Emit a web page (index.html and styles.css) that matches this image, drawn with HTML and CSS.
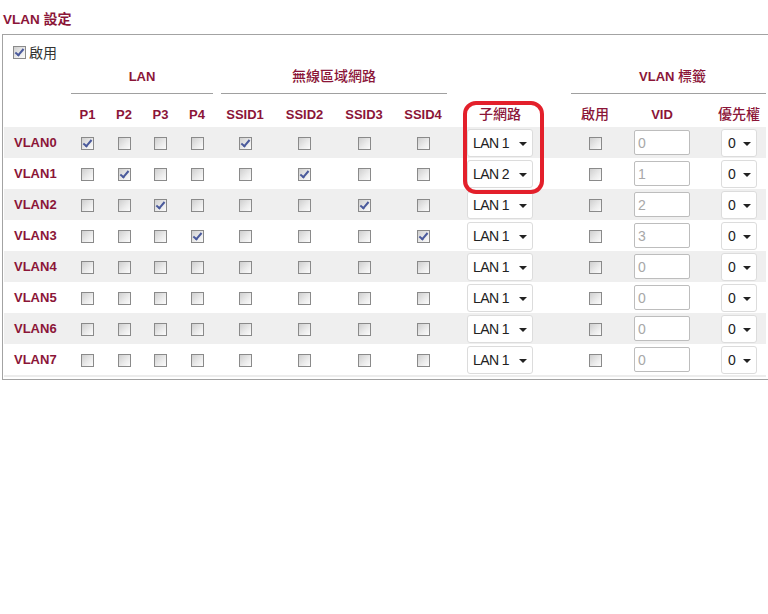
FILE: index.html
```html
<!DOCTYPE html>
<html>
<head lang="zh-Hant">
    <meta charset="UTF-8">
    <title>VLAN 設定</title>
    <link rel="stylesheet" href="styles.css">
</head>
<body>
<div class="page-title">VLAN <span class="zh">設定</span></div>
<div class="vlan-box">
    <div class="vlan-enable">
        <label><input type="checkbox" class="cb" checked> 啟用</label>
    </div>
    <table class="vlan-table">
        <colgroup>
            <col class="c-name">
            <col class="c-p1"><col class="c-p2"><col class="c-p3"><col class="c-p4">
            <col class="c-s1"><col class="c-s2"><col class="c-s3"><col class="c-s4">
            <col class="c-sub">
            <col class="c-tag"><col class="c-vid"><col class="c-pri">
        </colgroup>
        <tr class="group-row">
            <th></th>
            <th colspan="4"><div class="group group-lan">LAN</div></th>
            <th colspan="4"><div class="group group-wlan"><span class="zh">無線區域網路</span></div></th>
            <th></th>
            <th colspan="3"><div class="group group-tag">VLAN <span class="zh">標籤</span></div></th>
        </tr>
        <tr class="head-row">
            <th></th>
            <th>P1</th><th>P2</th><th>P3</th><th>P4</th>
            <th>SSID1</th><th>SSID2</th><th>SSID3</th><th>SSID4</th>
            <th class="th-sub"><span class="zh">子網路</span></th>
            <th><span class="zh">啟用</span></th>
            <th>VID</th>
            <th class="th-pri"><span class="zh">優先權</span></th>
        </tr>
        <tr class="odd">
            <td class="name">VLAN0</td>
            <td><input type="checkbox" class="cb" checked></td><td><input type="checkbox" class="cb"></td><td><input type="checkbox" class="cb"></td><td><input type="checkbox" class="cb"></td>
            <td><input type="checkbox" class="cb" checked></td><td><input type="checkbox" class="cb"></td><td><input type="checkbox" class="cb"></td><td><input type="checkbox" class="cb"></td>
            <td class="sub"><span class="sel"><select class="sel-lan"><option selected>LAN 1</option><option>LAN 2</option><option>LAN 3</option><option>LAN 4</option></select></span></td>
            <td><input type="checkbox" class="cb"></td>
            <td class="vid"><input type="text" class="vid-input" value="0" disabled></td>
            <td class="pri"><span class="sel"><select class="sel-pri"><option>0</option><option>1</option><option>2</option><option>3</option></select></span></td>
        </tr>
        <tr>
            <td class="name">VLAN1</td>
            <td><input type="checkbox" class="cb"></td><td><input type="checkbox" class="cb" checked></td><td><input type="checkbox" class="cb"></td><td><input type="checkbox" class="cb"></td>
            <td><input type="checkbox" class="cb"></td><td><input type="checkbox" class="cb" checked></td><td><input type="checkbox" class="cb"></td><td><input type="checkbox" class="cb"></td>
            <td class="sub"><span class="sel"><select class="sel-lan"><option>LAN 1</option><option selected>LAN 2</option><option>LAN 3</option><option>LAN 4</option></select></span></td>
            <td><input type="checkbox" class="cb"></td>
            <td class="vid"><input type="text" class="vid-input" value="1" disabled></td>
            <td class="pri"><span class="sel"><select class="sel-pri"><option>0</option><option>1</option><option>2</option><option>3</option></select></span></td>
        </tr>
        <tr class="odd">
            <td class="name">VLAN2</td>
            <td><input type="checkbox" class="cb"></td><td><input type="checkbox" class="cb"></td><td><input type="checkbox" class="cb" checked></td><td><input type="checkbox" class="cb"></td>
            <td><input type="checkbox" class="cb"></td><td><input type="checkbox" class="cb"></td><td><input type="checkbox" class="cb" checked></td><td><input type="checkbox" class="cb"></td>
            <td class="sub"><span class="sel"><select class="sel-lan"><option selected>LAN 1</option><option>LAN 2</option><option>LAN 3</option><option>LAN 4</option></select></span></td>
            <td><input type="checkbox" class="cb"></td>
            <td class="vid"><input type="text" class="vid-input" value="2" disabled></td>
            <td class="pri"><span class="sel"><select class="sel-pri"><option>0</option><option>1</option><option>2</option><option>3</option></select></span></td>
        </tr>
        <tr>
            <td class="name">VLAN3</td>
            <td><input type="checkbox" class="cb"></td><td><input type="checkbox" class="cb"></td><td><input type="checkbox" class="cb"></td><td><input type="checkbox" class="cb" checked></td>
            <td><input type="checkbox" class="cb"></td><td><input type="checkbox" class="cb"></td><td><input type="checkbox" class="cb"></td><td><input type="checkbox" class="cb" checked></td>
            <td class="sub"><span class="sel"><select class="sel-lan"><option selected>LAN 1</option><option>LAN 2</option><option>LAN 3</option><option>LAN 4</option></select></span></td>
            <td><input type="checkbox" class="cb"></td>
            <td class="vid"><input type="text" class="vid-input" value="3" disabled></td>
            <td class="pri"><span class="sel"><select class="sel-pri"><option>0</option><option>1</option><option>2</option><option>3</option></select></span></td>
        </tr>
        <tr class="odd">
            <td class="name">VLAN4</td>
            <td><input type="checkbox" class="cb"></td><td><input type="checkbox" class="cb"></td><td><input type="checkbox" class="cb"></td><td><input type="checkbox" class="cb"></td>
            <td><input type="checkbox" class="cb"></td><td><input type="checkbox" class="cb"></td><td><input type="checkbox" class="cb"></td><td><input type="checkbox" class="cb"></td>
            <td class="sub"><span class="sel"><select class="sel-lan"><option selected>LAN 1</option><option>LAN 2</option><option>LAN 3</option><option>LAN 4</option></select></span></td>
            <td><input type="checkbox" class="cb"></td>
            <td class="vid"><input type="text" class="vid-input" value="0" disabled></td>
            <td class="pri"><span class="sel"><select class="sel-pri"><option>0</option><option>1</option><option>2</option><option>3</option></select></span></td>
        </tr>
        <tr>
            <td class="name">VLAN5</td>
            <td><input type="checkbox" class="cb"></td><td><input type="checkbox" class="cb"></td><td><input type="checkbox" class="cb"></td><td><input type="checkbox" class="cb"></td>
            <td><input type="checkbox" class="cb"></td><td><input type="checkbox" class="cb"></td><td><input type="checkbox" class="cb"></td><td><input type="checkbox" class="cb"></td>
            <td class="sub"><span class="sel"><select class="sel-lan"><option selected>LAN 1</option><option>LAN 2</option><option>LAN 3</option><option>LAN 4</option></select></span></td>
            <td><input type="checkbox" class="cb"></td>
            <td class="vid"><input type="text" class="vid-input" value="0" disabled></td>
            <td class="pri"><span class="sel"><select class="sel-pri"><option>0</option><option>1</option><option>2</option><option>3</option></select></span></td>
        </tr>
        <tr class="odd">
            <td class="name">VLAN6</td>
            <td><input type="checkbox" class="cb"></td><td><input type="checkbox" class="cb"></td><td><input type="checkbox" class="cb"></td><td><input type="checkbox" class="cb"></td>
            <td><input type="checkbox" class="cb"></td><td><input type="checkbox" class="cb"></td><td><input type="checkbox" class="cb"></td><td><input type="checkbox" class="cb"></td>
            <td class="sub"><span class="sel"><select class="sel-lan"><option selected>LAN 1</option><option>LAN 2</option><option>LAN 3</option><option>LAN 4</option></select></span></td>
            <td><input type="checkbox" class="cb"></td>
            <td class="vid"><input type="text" class="vid-input" value="0" disabled></td>
            <td class="pri"><span class="sel"><select class="sel-pri"><option>0</option><option>1</option><option>2</option><option>3</option></select></span></td>
        </tr>
        <tr>
            <td class="name">VLAN7</td>
            <td><input type="checkbox" class="cb"></td><td><input type="checkbox" class="cb"></td><td><input type="checkbox" class="cb"></td><td><input type="checkbox" class="cb"></td>
            <td><input type="checkbox" class="cb"></td><td><input type="checkbox" class="cb"></td><td><input type="checkbox" class="cb"></td><td><input type="checkbox" class="cb"></td>
            <td class="sub"><span class="sel"><select class="sel-lan"><option selected>LAN 1</option><option>LAN 2</option><option>LAN 3</option><option>LAN 4</option></select></span></td>
            <td><input type="checkbox" class="cb"></td>
            <td class="vid"><input type="text" class="vid-input" value="0" disabled></td>
            <td class="pri"><span class="sel"><select class="sel-pri"><option>0</option><option>1</option><option>2</option><option>3</option></select></span></td>
        </tr>
    </table>
</div>
<!-- 標示子網路欄位 -->
<div class="mark-sub"></div>
</body>
</html>
```
FILE: styles.css
```css
html, body {
    margin: 0px;
    padding: 0px;
    background: #ffffff;
    overflow: hidden;
}
body {
    font-family: "Liberation Sans", Arial, "Noto Sans CJK TC", sans-serif;
    font-size: 13px;
    color: #222222;
}
.zh {
    font-family: "Noto Sans CJK TC", sans-serif;
    font-weight: 500;
    font-size: 14px;
    line-height: 1;
}
.page-title {
    padding: 10px 0px 0px 3px;
    height: 20px;
    line-height: 20px;
    margin-bottom: 4px;
    font-weight: bold;
    font-size: 13.5px;
    color: #8b1538;
}
.page-title .zh {
    font-weight: bold;
}
.vlan-box {
    margin-left: 2px;
    width: 765px;
    border: 1px solid #a3a3a3;
    border-right: none;
    padding: 0px 0px 2px 1px;
}
.vlan-enable {
    padding: 8px 0px 0px 9px;
    height: 18px;
    line-height: 18px;
    font-family: "Noto Sans CJK TC", sans-serif;
    font-size: 14px;
    color: #333333;
}
.vlan-enable label {
    display: flex;
    align-items: center;
    gap: 3px;
}
.vlan-table {
    width: 762px;
    table-layout: fixed;
    border-collapse: collapse;
    border-spacing: 0px;
    border-bottom: 2px solid #ececec;
}
.c-name { width: 65px; }
.c-p1 { width: 37px; }
.c-p2 { width: 36px; }
.c-p3 { width: 37px; }
.c-p4 { width: 36px; }
.c-s1 { width: 60px; }
.c-s2 { width: 59px; }
.c-s3 { width: 60px; }
.c-s4 { width: 58px; }
.c-sub { width: 108px; }
.c-tag { width: 70px; }
.c-vid { width: 64px; }
.c-pri { width: 72px; }

.vlan-table th {
    padding: 0px;
    font-weight: bold;
    color: #8b1538;
    text-align: center;
    line-height: 18px;
    white-space: nowrap;
}
.group-row th {
    padding-top: 7px;
    vertical-align: top;
}
.group {
    height: 18px;
    padding-bottom: 7px;
    border-bottom: 1px solid #a0a0a0;
}
.group-lan {
    margin: 0px 2px;
}
.group-wlan {
    margin: 0px 5px 0px 6px;
}
.group-tag {
    margin: 0px 0px 0px 11px;
    padding-left: 8px;
}
.head-row th {
    height: 18px;
    padding: 12px 0px 3px 0px;
}
.head-row th.th-sub {
    text-align: left;
    padding-left: 27px;
}
.head-row th.th-pri {
    padding-left: 18px;
}
.vlan-table td {
    padding: 0px;
    height: 31px;
    text-align: center;
    vertical-align: middle;
}
.vlan-table tr.odd td {
    background: #efefef;
}
.vlan-table td.name {
    text-align: left;
    padding-left: 10px;
    font-weight: bold;
    color: #8b1538;
}
.vlan-table td.sub {
    text-align: left;
    padding-left: 15px;
}
.vlan-table td.vid {
    text-align: left;
    padding-left: 4px;
}
.vlan-table td.pri {
    text-align: left;
    padding-left: 27px;
}

/* 舊式勾選框 */
input.cb {
    -webkit-appearance: none;
    appearance: none;
    position: relative;
    display: inline-block;
    vertical-align: middle;
    width: 13px;
    height: 13px;
    margin: 0px;
    border: 1px solid #8a8a8a;
    background: linear-gradient(135deg, #cfcfcf 0%, #ececec 60%, #fbfbfb 100%);
    box-sizing: border-box;
}
input.cb:checked::after {
    content: "";
    position: absolute;
    left: 3px;
    top: 0px;
    width: 3px;
    height: 7px;
    border-right: 2px solid #4a5a9c;
    border-bottom: 2px solid #4a5a9c;
    transform: rotate(40deg);
}

.sel {
    position: relative;
    display: inline-block;
    vertical-align: middle;
}
.sel::after {
    content: "";
    position: absolute;
    right: 6px;
    top: 13px;
    border-left: 4px solid transparent;
    border-right: 4px solid transparent;
    border-top: 4px solid #222222;
}
.sel select {
    -webkit-appearance: none;
    appearance: none;
    display: block;
    height: 28px;
    margin: 0px;
    border: 1px solid #dcdcdc;
    border-radius: 3px;
    background: #ffffff;
    font-family: "Liberation Sans", Arial, sans-serif;
    font-size: 14px;
    letter-spacing: -0.6px;
    color: #222222;
    padding: 0px 0px 0px 5px;
    box-sizing: border-box;
}
select.sel-lan {
    width: 66px;
}
select.sel-pri {
    width: 36px;
    padding-left: 6px;
}
.vid-input {
    display: block;
    width: 56px;
    height: 25px;
    margin: 0px;
    padding: 0px 0px 0px 3px;
    box-sizing: border-box;
    border: 1px solid #bdbdbd;
    border-radius: 2px;
    background: #ffffff;
    font-family: "Liberation Sans", Arial, sans-serif;
    font-size: 14px;
    color: #a8a8a8;
}
.mark-sub {
    position: absolute;
    left: 463px;
    top: 101px;
    width: 81px;
    height: 93px;
    box-sizing: border-box;
    border: 4px solid #e3202b;
    border-radius: 13px;
}
```
